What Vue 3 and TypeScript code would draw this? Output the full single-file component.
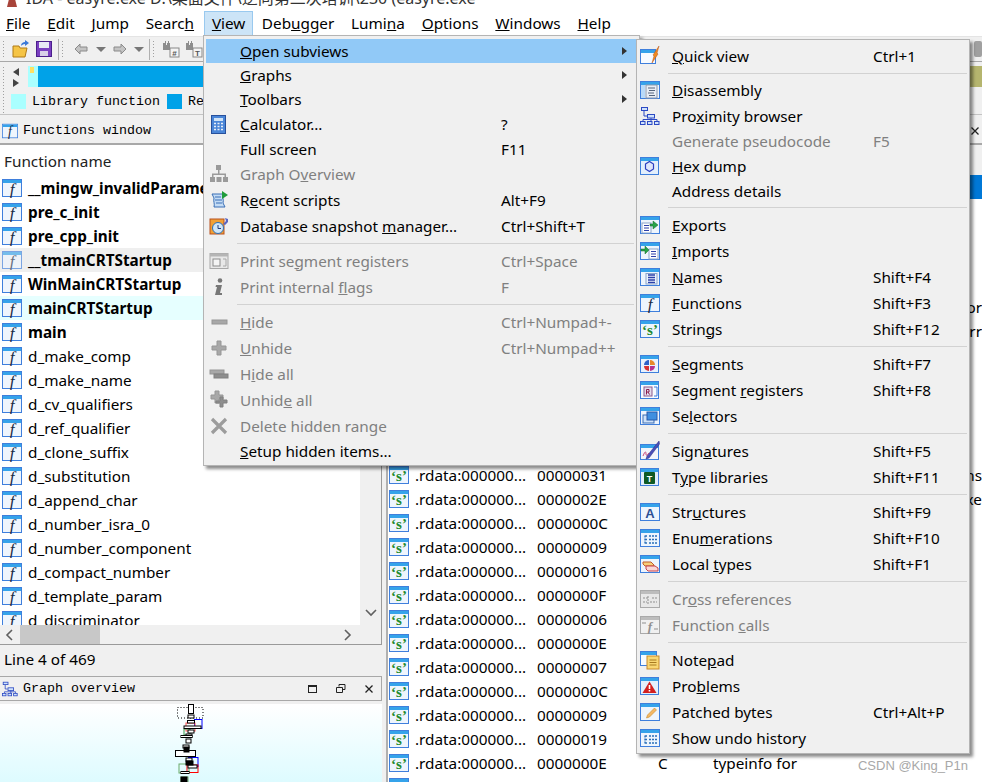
<script setup lang="ts">
// IDA Freeware main window with the View > Open subviews menu opened

type MenuItem = { label?: string; icon?: string; keys?: string; off?: boolean; more?: boolean; on?: boolean; sep?: boolean }

const frame = (inner: string) =>
  `<rect x=".5" y="1.500" width="19" height="17" fill="#eef5fd" stroke="#3f7fdc"/><rect x="1" y="2" width="18" height="3" fill="#35a3ea"/>${inner}`

const listLines = '<path d="M8 8h7M8 10.500h7M8 13h7M8 15.500h7" stroke="#2c3fa8" stroke-width="1.400"/><rect x="6" y="6.500" width="11" height="10.500" fill="none" stroke="#8aa3c9"/>'
const treeLines = '<path d="M5 7.500v8M5 8h3M5 11.500h3M5 15h3M9 8h8M9 11.500h8M9 15h8" stroke="#2a6fb8" stroke-width="1.300" stroke-dasharray="2 1"/>'

const icons: Record<string, string> = {
  func: frame('<text x="10" y="16.500" text-anchor="middle" class="glyph-f">f</text>'),
  str: frame('<text x="10" y="16" text-anchor="middle" class="glyph-s">‘s’</text>'),
  calc: '<rect x="2.500" y="1.500" width="14" height="18" fill="#4a86d8" stroke="#27509c"/><rect x="5" y="4" width="9" height="3" fill="#cfe3f7"/><path d="M5 9.500h9M5 12.500h9M5 15.500h9" stroke="#e9eef7" stroke-width="1.600" stroke-dasharray="2 1.500"/>',
  graphOff: '<g fill="#9a9a9a"><rect x="7" y="1" width="5" height="5"/><rect x="1" y="13" width="5" height="5"/><rect x="7.500" y="13" width="5" height="5"/><rect x="14" y="13" width="5" height="5"/><path d="M9 6h1.500v3.500H17V13h-1.500v-2h-11v2H3V9.500h6z"/></g>',
  scripts: '<path d="M3 4h11c-1 3 1 6 0 9l2 4H5c1-3-1-6 0-9z" fill="#c4dcf5" stroke="#3a6fb5"/><path d="M6 7h6M6 10h7M7 13h6" stroke="#3a6fb5"/><path d="M13 1l6 4-6 4z" fill="#1f9c3a"/>',
  snapshot: '<rect x="1" y="3" width="14" height="15" fill="#f0a035" stroke="#b8501f"/><circle cx="9" cy="12" r="5.500" fill="#cfe6f8" stroke="#2c6fb5"/><path d="M9 9v3.500h3" stroke="#223a78" fill="none"/><path d="M14 8l3-3-1-3 3 1v3l-3 3z" fill="#5a66c2"/>',
  segOff: '<rect x="1" y="2.500" width="18" height="15" fill="#e8e8e8" stroke="#a8a8a8"/><rect x="1" y="2.500" width="18" height="3" fill="#b5b5b5"/><rect x="4" y="8" width="7" height="7" fill="#f4f4f4" stroke="#8c8c8c"/><path d="M14 8h3v7h-3" fill="none" stroke="#a8a8a8"/>',
  infoOff: '<circle cx="11" cy="3.500" r="2.300" fill="#777"/><path d="M7 8h6l-2 8h2v2H6l2-8H6.500z" fill="#777"/>',
  hide: '<rect x="3" y="8" width="15" height="4" fill="#a8a8a8" stroke="#969696"/>',
  unhide: '<path d="M8 3h4v5h5v4h-5v5H8v-5H3V8h5z" fill="#a8a8a8" stroke="#969696"/>',
  hideAll: '<rect x="1" y="6" width="14" height="4" fill="#a8a8a8" stroke="#969696"/><rect x="5" y="10" width="14" height="4" fill="#8e8e8e" stroke="#808080"/>',
  unhideAll: '<path d="M6 1h4v4h4v4h-4v4H6V9H2V5h4z" fill="#a8a8a8" stroke="#969696"/><path d="M11 7h3v3h4v3h-4v4h-3v-4H7v-2h4z" fill="#8e8e8e" stroke="#808080"/>',
  deleteOff: '<path d="M3 3l14 14M17 3L3 17" stroke="#9c9c9c" stroke-width="3.200"/>',
  quick: '<rect x=".5" y="3.500" width="15" height="14" fill="#f7fbff" stroke="#3f7fdc"/><rect x="1" y="4" width="14" height="3" fill="#35a3ea"/><path d="M19 0l-6 9 1 1-2 7 6-9-1-1z" fill="#ef8a1e" stroke="#b7521a" stroke-width=".5"/>',
  disasm: frame('<rect x="6" y="5" width="11" height="13" fill="#e9eef5" stroke="#8a97ab"/><path d="M8 8h7M9 10.500h6M8 13h6M9 15.500h6" stroke="#56657c"/><rect x="1" y="5" width="4" height="13" fill="#b9daf8"/>'),
  proximity: '<g fill="#cfe2fb" stroke="#2b49c4"><rect x="1.500" y="1.500" width="6" height="3"/><rect x="7.500" y="8.500" width="7" height="3.500"/><rect x=".5" y="15.500" width="4.500" height="3"/><rect x="7.500" y="15.500" width="4.500" height="3"/><rect x="14.500" y="15.500" width="4.500" height="3"/></g><path d="M4 5v5h3M11 12v3M3 15v-1.500h14V15" fill="none" stroke="#2b49c4"/>',
  hex: '<rect x=".5" y="1.500" width="18" height="17" fill="#e3effc" stroke="#3f7fdc"/><rect x="1" y="2" width="17" height="3" fill="#35a3ea"/><path d="M5.500 8l4-2.500 4 2.500v5l-4 2.500-4-2.500z" fill="#dfe6fb" stroke="#2c3fc0" stroke-width="1.200"/>',
  exports: frame('<rect x="2" y="8" width="9" height="10" fill="#fff" stroke="#8aa3c9"/><path d="M4 10.500h5M4 13h5M4 15.500h5" stroke="#2c3fa8"/><path d="M10 9h3V6l5 4-5 4v-3h-3z" fill="#27a34a" stroke="#16692c" stroke-width=".5"/>'),
  imports: frame('<rect x="9" y="8" width="9" height="10" fill="#fff" stroke="#8aa3c9"/><path d="M11 10.500h5M11 13h5M11 15.500h5" stroke="#2c3fa8"/><path d="M1 8h4V5l4 4-4 4v-3H1z" fill="#27a34a" stroke="#16692c" stroke-width=".5"/>'),
  names: frame(listLines),
  segments: '<rect x=".5" y="1.500" width="18" height="17" fill="#eaf3fd" stroke="#3f7fdc"/><rect x="1" y="2" width="17" height="3" fill="#35a3ea"/><path d="M4 11a5 5 0 0 1 5-5v5z" fill="#2f62c8"/><path d="M10 6a5 5 0 0 1 5 5h-5z" fill="#e8892a"/><path d="M4 12h5v5a5 5 0 0 1-5-5z" fill="#d63333"/><path d="M10 12h5a5 5 0 0 1-5 5z" fill="#b5338f"/>',
  segregs: '<rect x=".5" y="1.500" width="18" height="17" fill="#f7fbff" stroke="#3f7fdc"/><rect x="1" y="2" width="17" height="3" fill="#35a3ea"/><rect x="4" y="7" width="8" height="9" fill="#e3dcec" stroke="#8c5a8c"/><path d="M6.500 14.500v-5h2.500v2.500H6.500M8 12l1.500 2.500" fill="none" stroke="#8b1d4d"/><path d="M14 7h3v9h-3" fill="none" stroke="#3f7fdc"/>',
  selectors: frame('<rect x="3" y="9" width="11" height="8" fill="#cfe2f8" stroke="#3c6fb5"/><rect x="7" y="6" width="10" height="8" fill="#3f8fe0" stroke="#2858a8"/>'),
  signatures: '<rect x=".5" y="3.500" width="18" height="15" fill="#f2f5fb" stroke="#3f7fdc"/><rect x="1" y="4" width="17" height="3" fill="#35a3ea"/><path d="M19 0L7 15l-1 3 3-1L19.500 3z" fill="#4a4fb8" stroke="#2a2a80" stroke-width=".5"/><path d="M3 15c2-5 3-5 3-2s2 0 3-1" fill="none" stroke="#c5487a"/>',
  typelib: '<rect x=".5" y="1.500" width="18" height="17" fill="#e3effc" stroke="#3f7fdc"/><rect x="1" y="2" width="17" height="3" fill="#35a3ea"/><rect x="4" y="5" width="11" height="12" rx="1" fill="#0f5a24"/><text x="9.500" y="15" text-anchor="middle" class="glyph-t">T</text>',
  structs: frame('<text x="10" y="16" text-anchor="middle" class="glyph-a">A</text>'),
  enums: frame(treeLines),
  local: frame('<path d="M3 8h8l3 3v1H5l-2-2z" fill="#f6cf7a" stroke="#c05a2a"/><path d="M6 12h9l3 2v3H8l-2-2z" fill="#f9d6d6" stroke="#c8434a"/>'),
  xrefOff: '<rect x=".5" y="1.500" width="19" height="17" fill="#e8e8e8" stroke="#aaa"/><rect x="1" y="2" width="18" height="3" fill="#bdbdbd"/><path d="M3 9h6M12 9h5M3 13h4M10 13h7M8 7v8" stroke="#8f8f8f" stroke-dasharray="2 1"/>',
  callsOff: '<rect x=".5" y="1.500" width="19" height="17" fill="#f0f0f0" stroke="#aaa"/><rect x="1" y="2" width="18" height="3" fill="#bdbdbd"/><text x="10" y="16" text-anchor="middle" class="glyph-off">f</text><path d="M2 8h4M14 14h4" stroke="#8f8f8f"/>',
  notepad: '<rect x=".5" y="1.500" width="16" height="14" fill="#f7fbff" stroke="#3f7fdc"/><rect x="1" y="2" width="15" height="3" fill="#35a3ea"/><rect x="7" y="6" width="12" height="13" fill="#f9d773" stroke="#c98a2a"/><path d="M9.500 10h7M9.500 12.500h7M9.500 15h7" stroke="#a87a20"/>',
  problems: '<rect x=".5" y="1.500" width="18" height="17" fill="#e3effc" stroke="#3f7fdc"/><rect x="1" y="2" width="17" height="3" fill="#35a3ea"/><path d="M9.500 5.500l7 11.500h-14z" fill="#d31f1f"/><path d="M9.500 9v4M9.500 14v1.500" stroke="#fff" stroke-width="1.600"/>',
  patched: frame('<path d="M14.500 6l2 2-7 7-3 1 1-3z" fill="#f3b866" stroke="#c98a2a" stroke-width=".6"/>'),
  undo: frame(treeLines),
}

const viewMenu: MenuItem[] = [
  { label: '&Open subviews', more: true, on: true },
  { label: '&Graphs', more: true },
  { label: '&Toolbars', more: true },
  { label: '&Calculator...', icon: 'calc', keys: '?' },
  { label: 'Full screen', keys: 'F11' },
  { label: 'Graph O&verview', icon: 'graphOff', off: true },
  { label: 'R&ecent scripts', icon: 'scripts', keys: 'Alt+F9' },
  { label: 'Database snapshot &manager...', icon: 'snapshot', keys: 'Ctrl+Shift+T' },
  { sep: true },
  { label: 'Print se&gment registers', icon: 'segOff', keys: 'Ctrl+Space', off: true },
  { label: 'Print internal &flags', icon: 'infoOff', keys: 'F', off: true },
  { sep: true },
  { label: '&Hide', icon: 'hide', keys: 'Ctrl+Numpad+-', off: true },
  { label: '&Unhide', icon: 'unhide', keys: 'Ctrl+Numpad++', off: true },
  { label: 'H&ide all', icon: 'hideAll', off: true },
  { label: 'Unhid&e all', icon: 'unhideAll', off: true },
  { label: 'Delete hidden range', icon: 'deleteOff', off: true },
  { label: '&Setup hidden items...' },
]

const subviews: MenuItem[] = [
  { label: '&Quick view', icon: 'quick', keys: 'Ctrl+1' },
  { sep: true },
  { label: '&Disassembly', icon: 'disasm' },
  { label: 'Pro&ximity browser', icon: 'proximity' },
  { label: 'Generate pseudocode', keys: 'F5', off: true },
  { label: '&Hex dump', icon: 'hex' },
  { label: 'Address details' },
  { sep: true },
  { label: '&Exports', icon: 'exports' },
  { label: '&Imports', icon: 'imports' },
  { label: '&Names', icon: 'names', keys: 'Shift+F4' },
  { label: '&Functions', icon: 'func', keys: 'Shift+F3' },
  { label: 'Strin&gs', icon: 'str', keys: 'Shift+F12' },
  { sep: true },
  { label: '&Segments', icon: 'segments', keys: 'Shift+F7' },
  { label: 'Segment &registers', icon: 'segregs', keys: 'Shift+F8' },
  { label: 'Se&lectors', icon: 'selectors' },
  { sep: true },
  { label: 'Sign&atures', icon: 'signatures', keys: 'Shift+F5' },
  { label: 'T&ype libraries', icon: 'typelib', keys: 'Shift+F11' },
  { sep: true },
  { label: 'Str&uctures', icon: 'structs', keys: 'Shift+F9' },
  { label: 'Enu&merations', icon: 'enums', keys: 'Shift+F10' },
  { label: 'Local &types', icon: 'local', keys: 'Shift+F1' },
  { sep: true },
  { label: 'Cr&oss references', icon: 'xrefOff', off: true },
  { label: 'Function &calls', icon: 'callsOff', off: true },
  { sep: true },
  { label: 'Note&pad', icon: 'notepad' },
  { label: 'Pro&blems', icon: 'problems' },
  { label: 'Patched bytes', icon: 'patched', keys: 'Ctrl+Alt+P' },
  { label: 'Show undo history', icon: 'undo' },
]

const menus = [
  { name: 'menu-view', items: viewMenu },
  { name: 'menu-sub', items: subviews },
]

const menubar = ['&File', '&Edit', '&Jump', 'Searc&h', '&View', 'Deb&ugger', 'Lumi&na', '&Options', '&Windows', '&Help']

// "&x" marks the mnemonic letter, same way Qt writes it
function parts(label = ''): [string, string, string] {
  const i = label.indexOf('&')
  if (i < 0) return [label, '', '']
  return [label.slice(0, i), label.charAt(i + 1), label.slice(i + 2)]
}

const functions = [
  { name: '__mingw_invalidParameterHandler', bold: true },
  { name: 'pre_c_init', bold: true },
  { name: 'pre_cpp_init', bold: true },
  { name: '__tmainCRTStartup', bold: true, cls: 'sel' },
  { name: 'WinMainCRTStartup', bold: true },
  { name: 'mainCRTStartup', bold: true, cls: 'cyan' },
  { name: 'main', bold: true },
  { name: 'd_make_comp' },
  { name: 'd_make_name' },
  { name: 'd_cv_qualifiers' },
  { name: 'd_ref_qualifier' },
  { name: 'd_clone_suffix' },
  { name: 'd_substitution' },
  { name: 'd_append_char' },
  { name: 'd_number_isra_0' },
  { name: 'd_number_component' },
  { name: 'd_compact_number' },
  { name: 'd_template_param' },
  { name: 'd_discriminator' },
]

const lengths = ['00000012', '00000021', '0000001A', '00000008', '00000014', '00000025', '00000031', '0000000B', '00000010', '00000018', '00000007', '0000001C',
  '00000031', '0000002E', '0000000C', '00000009', '00000016', '0000000F', '00000006', '0000000E', '00000007', '0000000C', '00000009', '00000019', '0000000E', '00000011']
const tails: Record<number, string> = { 5: 'or', 6: 'rr', 12: 'ns', 13: 'exe' }
const strings = lengths.map((len, i) => ({
  len,
  type: i === 24 ? 'C' : '',
  text: i === 24 ? 'typeinfo for' : '',
  tail: tails[i] ?? '',
  sel: i === 0,
}))

const graphBoxes = [
  { x: 188.5, y: 703.5, w: 5, h: 9, c: '#000', f: '#fff' },
  { x: 194.5, y: 718.5, w: 7.5, h: 9, c: '#0000ff', f: 'none' },
  { x: 186, y: 722, w: 9, h: 8, c: '#ff5050', f: 'none' },
  { x: 184, y: 728, w: 6, h: 6, c: '#3a9a4a', f: 'none' },
  { x: 188.5, y: 756.5, w: 9.5, h: 9, c: '#0000ff', f: 'none' },
  { x: 187, y: 764, w: 11, h: 7.5, c: '#ff0000', f: 'none' },
  { x: 179, y: 763, w: 10, h: 9, c: '#6aa96a', f: 'none' },
  { x: 181, y: 776, w: 7, h: 6, c: '#6aa96a', f: 'none' },
  { x: 188, y: 714, w: 6, h: 3, c: '#000', f: '#fff' },
  { x: 187.500, y: 719.500, w: 7, h: 2.500, c: '#000', f: '#fff' },
  { x: 184, y: 725, w: 17, h: 2.500, c: '#000', f: '#fff' },
  { x: 188, y: 729, w: 6, h: 3, c: '#000', f: '#fff' },
  { x: 186, y: 733, w: 6, h: 3, c: '#000', f: '#fff' },
  { x: 181, y: 734.500, w: 11, h: 2, c: '#000', f: '#fff' },
  { x: 186, y: 738, w: 5, h: 4, c: '#000', f: '#fff' },
  { x: 183, y: 744, w: 6, h: 3, c: '#000', f: '#fff' },
  { x: 175.500, y: 749.500, w: 20, h: 6, c: '#000', f: '#fff' },
  { x: 186, y: 757, w: 6, h: 3, c: '#000', f: '#fff' },
  { x: 188, y: 764, w: 9, h: 3, c: '#000', f: '#fff' },
  { x: 181, y: 770.500, w: 8, h: 2, c: '#000', f: '#fff' },
  { x: 181, y: 776, w: 6, h: 6, c: '#000', f: '#000' },
  { x: 184, y: 746, w: 5, h: 5, c: '#000', f: '#000' },
  { x: 186, y: 760, w: 7, h: 4, c: '#000', f: '#000' },
]
</script>

<template>
  <div class="app">
    <div class="titlebar">
      <svg class="title-icon" width="12" height="12" viewBox="0 0 12 12"><path d="M1 12L4 0h4l3 12z" fill="#a8443a"/></svg>
      <span>IDA - easyre.exe D:\桌面文件\逆向第二次培训\230 (easyre.exe</span>
    </div>

    <nav class="menubar">
      <span v-for="m in menubar" :key="m" class="menubar-item" :class="{ open: m === '&View' }">{{ parts(m)[0] }}<u>{{ parts(m)[1] }}</u>{{ parts(m)[2] }}</span>
    </nav>

    <div class="toolbar">
      <i class="grip"></i>
      <svg class="tool folder" width="18" height="18" viewBox="0 0 18 18"><path d="M1 6h6l1 2h7l-2 9H1z" fill="#f5c445" stroke="#b07a16"/><path d="M9 6c0-3 2-4 4-4V0l4 3-4 3V4c-2 0-3 1-4 2z" fill="#3a78d8"/></svg>
      <svg class="tool save" width="16" height="16" viewBox="0 0 16 16"><rect x=".5" y=".5" width="15" height="15" fill="#7a3fc0" stroke="#4b1f8c"/><rect x="3" y="1" width="10" height="6" fill="#e8e8f5"/><rect x="4" y="10" width="8" height="5" fill="#d8d0e8"/></svg>
      <i class="toolsep"></i>
      <i class="grip"></i>
      <svg class="tool back" width="14" height="12" viewBox="0 0 14 12"><path d="M6 1v3h7v4H6v3L1 6z" fill="#c4c4c4" stroke="#8a8a8a"/></svg>
      <i class="drop first"></i>
      <svg class="tool fwd" width="14" height="12" viewBox="0 0 14 12"><path d="M8 1v3H1v4h7v3l5-5z" fill="#c4c4c4" stroke="#8a8a8a"/></svg>
      <i class="drop second"></i>
      <i class="toolsep next"></i>
      <i class="grip"></i>
      <svg class="tool bino" width="18" height="18" viewBox="0 0 18 18"><path d="M1 3h3v2h1V3h3v7H1zM3 1h1v2H3zM6 1h1v2H6z" fill="#8d8d8d"/><rect x="8" y="8" width="9" height="9" fill="#f4f4f4" stroke="#888"/><text x="12.500" y="15.500" text-anchor="middle" class="glyph-tool">#</text></svg>
      <svg class="tool bino two" width="18" height="18" viewBox="0 0 18 18"><path d="M1 3h3v2h1V3h3v7H1zM3 1h1v2H3zM6 1h1v2H6z" fill="#8d8d8d"/><rect x="8" y="8" width="9" height="9" fill="#f4f4f4" stroke="#888"/><text x="12.500" y="15.500" text-anchor="middle" class="glyph-tool">T</text></svg>
      <i class="toolend"></i>
    </div>

    <div class="navigator">
      <div class="nav-row">
        <i class="grip tall"></i>
        <div class="nav-arrows"><i class="arrow-left"></i><i class="arrow-right"></i></div>
        <div class="nav-band"><i class="band-lib"><b></b></i><i class="band-code"></i><i class="band-data"></i></div>
      </div>
      <div class="legend">
        <i class="swatch lib"></i><span class="mono legend-lib">Library function</span>
        <i class="swatch code"></i><span class="mono">Regular function</span>
      </div>
    </div>

    <div class="workspace">
      <section class="left">
        <header class="dock-title">
          <svg class="dock-icon" width="16" height="16" viewBox="0 0 20 20" v-html="icons.func"></svg>
          <span class="mono">Functions window</span>
        </header>
        <div class="dock-body">
          <div class="list-wrap">
            <div class="list">
              <div class="list-head">Function name</div>
              <div class="rows">
                <div v-for="f in functions" :key="f.name" class="fn-row" :class="[f.cls, { bold: f.bold }]">
                  <svg class="row-icon" width="20" height="20" viewBox="0 0 20 20" v-html="icons.func"></svg>
                  <span class="fn-name">{{ f.name }}</span>
                </div>
              </div>
            </div>
            <div class="vscroll"><svg width="12" height="8" viewBox="0 0 12 8"><path d="M1 1l5 5 5-5" fill="none" stroke="#606060" stroke-width="1.600"/></svg></div>
          </div>
          <div class="hscroll">
            <svg class="hs-left" width="8" height="12" viewBox="0 0 8 12"><path d="M7 1L2 6l5 5" fill="none" stroke="#606060" stroke-width="1.600"/></svg>
            <i class="hs-thumb"></i>
            <svg class="hs-right" width="8" height="12" viewBox="0 0 8 12"><path d="M1 1l5 5-5 5" fill="none" stroke="#606060" stroke-width="1.600"/></svg>
          </div>
        </div>
        <div class="status">Line 4 of 469</div>
        <header class="dock-title graph-title">
          <svg class="dock-icon" width="16" height="16" viewBox="0 0 20 20" v-html="icons.proximity"></svg>
          <span class="mono">Graph overview</span>
          <span class="dock-btns">
            <svg width="10" height="10" viewBox="0 0 10 10"><rect x=".5" y="1.500" width="8" height="7" fill="none" stroke="#222"/><path d="M0 2h9" stroke="#222" stroke-width="2"/></svg>
            <svg width="10" height="10" viewBox="0 0 10 10"><path d="M3 2.500V.5h6v5H7M.5 3.500h6v5h-6z" fill="none" stroke="#222"/></svg>
            <svg width="10" height="10" viewBox="0 0 10 10"><path d="M1.500 1.500l7 7M8.500 1.500l-7 7" stroke="#222" stroke-width="1.300"/></svg>
          </span>
        </header>
        <div class="graph">
          <svg class="graph-svg" width="381" height="79" viewBox="0 703 381 79">
            <rect x="177.500" y="706.500" width="25.500" height="10.500" fill="none" stroke="#000" stroke-dasharray="1 2"/>
            <rect v-for="(b, i) in graphBoxes" :key="i" :x="b.x" :y="b.y" :width="b.w" :height="b.h" :fill="b.f" :stroke="b.c"/>
          </svg>
        </div>
      </section>

      <section class="right">
        <header class="dock-title right-title">
          <svg width="10" height="10" viewBox="0 0 10 10"><path d="M1.500 1.500l7 7M8.500 1.500l-7 7" stroke="#222" stroke-width="1.300"/></svg>
        </header>
        <div class="strings">
          <div v-for="(s, i) in strings" :key="i" class="str-row" :class="{ sel: s.sel }">
            <svg class="row-icon" width="20" height="20" viewBox="0 0 20 20" v-html="icons.str"></svg>
            <span class="str-addr">.rdata:000000...</span>
            <span class="str-len">{{ s.len }}</span>
            <span class="str-type">{{ s.type }}</span>
            <span class="str-text">{{ s.text }}</span>
            <span class="str-tail">{{ s.tail }}</span>
          </div>
        </div>
      </section>
    </div>

    <div v-for="menu in menus" :key="menu.name" class="menu" :class="menu.name">
      <template v-for="(item, i) in menu.items" :key="i">
        <div v-if="item.sep" class="menu-sep"></div>
        <div v-else class="menu-item" :class="{ off: item.off, on: item.on, iconed: item.icon }">
          <span class="menu-icon"><svg v-if="item.icon" width="20" height="20" viewBox="0 0 20 20" v-html="icons[item.icon]"></svg></span>
          <span class="menu-label">{{ parts(item.label)[0] }}<u>{{ parts(item.label)[1] }}</u>{{ parts(item.label)[2] }}</span>
          <span class="menu-keys">{{ item.keys }}</span>
          <i v-if="item.more" class="menu-more"></i>
        </div>
      </template>
    </div>

    <div class="watermark">CSDN @King_P1n</div>
  </div>
</template>

<style scoped>
.app {
  position: relative;
  width: 982px;
  height: 782px;
  overflow: hidden;
  background: #f0f0f0;
  color: #000;
  font-family: "Noto Sans", "Noto Sans CJK SC", sans-serif;
  font-size: 15.3px;
}

.mono {
  font-family: "Liberation Mono", monospace;
  font-size: 13.33px;
}

.titlebar {
  display: flex;
  height: 10px;
  overflow: hidden;
  background: #fff;
  color: #333;
  font-size: 16px;
  line-height: 1;
  white-space: nowrap;
}
.title-icon {
  flex: none;
  margin: -5px 0 0 6px;
}
.titlebar span {
  display: block;
  margin: -10px 0 0 8px;
}

.menubar {
  display: flex;
  height: 26px;
  padding-left: 1px;
  background: #fff;
  border-bottom: 1px solid #e4e4e4;
  align-items: center;
}
.menubar-item {
  display: flex;
  align-items: center;
  height: 26px;
  padding: 0 5px;
  margin-right: 6.8px;
  white-space: pre;
}
.menubar-item.open {
  height: 25px;
  margin: 0 4px 0 -1.5px;
  padding: 0 6.5px;
  background: #cce4f7;
  border: 1px solid #99c9ef;
  box-sizing: border-box;
}

.toolbar {
  display: flex;
  align-items: center;
  height: 25px;
  border-bottom: 1px solid #a8a8a8;
  box-sizing: border-box;
}
.grip {
  width: 3px;
  height: 19px;
  margin-left: 2px;
  background-image: radial-gradient(#a0a0a0 0.8px, transparent 1px);
  background-size: 3px 3px;
}
.grip.tall {
  height: 48px;
  flex: none;
}
.tool {
  flex: none;
}
.folder { margin-left: 7px; }
.save { margin-left: 6px; }
.toolsep {
  width: 1px;
  height: 21px;
  margin-left: 6px;
  background: #b0b0b0;
}
.back { margin-left: 10px; }
.drop {
  width: 0;
  height: 0;
  border: 5px solid transparent;
  border-top: 5px solid #777;
  border-bottom: 0;
}
.drop.first { margin-left: 8px; }
.fwd { margin-left: 7px; }
.drop.second { margin-left: 7px; }
.toolsep.next { margin-left: 5px; }
.bino { margin-left: 7px; }
.bino.two { margin-left: 5px; }
.toolend {
  width: 8px;
  height: 16px;
  margin-left: auto;
  border-radius: 2px;
  background: #a0a0a0;
}

.navigator {
  height: 53px;
  border-bottom: 1px solid #c4c4c4;
  box-sizing: border-box;
}
.nav-row {
  display: flex;
  height: 25px;
  padding-top: 4px;
  box-sizing: border-box;
}
.nav-arrows {
  display: flex;
  flex-direction: column;
  width: 23px;
  align-items: center;
  gap: 3px;
  padding: 2px 2px 0 1px;
  box-sizing: border-box;
}
.arrow-left, .arrow-right {
  width: 0;
  height: 0;
  border: 4px solid transparent;
}
.arrow-left { border-right: 6px solid #444; border-left: 0; }
.arrow-right { border-left: 6px solid #444; border-right: 0; }
.nav-band {
  display: flex;
  flex: 1;
  height: 21px;
}
.band-lib {
  position: relative;
  width: 10px;
  background: #aaffff;
}
.band-lib b {
  position: absolute;
  left: 2px;
  top: 1px;
  width: 4px;
  height: 6px;
  background: #ffe060;
}
.band-code {
  flex: 1;
  background: #00a2e8;
}
.band-data {
  width: 80px;
  background: #b5b56e;
}
.legend {
  display: flex;
  align-items: center;
  height: 24px;
  padding: 5px 0 0 11px;
  box-sizing: border-box;
}
.swatch {
  width: 15px;
  height: 15px;
  margin-right: 6px;
}
.swatch.lib { background: #aaffff; }
.swatch.code { background: #00a2e8; }
.legend-lib { margin-right: 7px; }

.workspace {
  display: flex;
  gap: 4px;
  height: 667px;
  padding-top: 3px;
  box-sizing: border-box;
}

.left {
  width: 382px;
  flex: none;
}
.dock-title {
  display: flex;
  align-items: center;
  height: 25px;
  padding-left: 2px;
  gap: 5px;
  border-bottom: 2px solid #a8a8a8;
  box-sizing: content-box;
}
.dock-icon { flex: none; }

.dock-body {
  height: 500px;
  border-right: 1px solid #9a9a9a;
  border-bottom: 1px solid #9a9a9a;
  box-sizing: border-box;
}
.list-wrap {
  display: flex;
  height: 480px;
}
.list {
  width: 360px;
  overflow: hidden;
  background: #fff;
}
.list-head {
  display: flex;
  align-items: center;
  height: 24px;
  margin: 3px 0 4px;
  padding: 1px 0 0 4px;
  box-sizing: border-box;
  color: #222;
}
.rows {
  height: 449px;
  overflow: hidden;
}
.fn-row {
  display: flex;
  align-items: center;
  height: 24px;
  padding-left: 2px;
  gap: 6px;
  white-space: nowrap;
}
.fn-name { margin-bottom: 1px; }
.fn-row.bold { font-weight: 700; }
.fn-row.sel { background: #efefef; }
.fn-row.sel .row-icon { opacity: 0.65; }
.fn-row.cyan { background: #e6ffff; }
.row-icon { flex: none; }
.vscroll {
  display: flex;
  flex: 1;
  align-items: flex-end;
  justify-content: center;
  padding-bottom: 8px;
  box-sizing: border-box;
}
.hscroll {
  position: relative;
  display: flex;
  align-items: center;
  height: 19px;
}
.hs-left { margin-left: 5px; }
.hs-thumb {
  width: 80px;
  height: 19px;
  margin-left: 7px;
  background: #c8c8c8;
}
.hs-right { margin-left: 244px; }

.status {
  display: flex;
  align-items: center;
  height: 31px;
  padding: 0 0 3px 4px;
  box-sizing: border-box;
}
.graph-title {
  height: 23px;
  border-top: 1px solid #a8a8a8;
  border-bottom-width: 1px;
  border-right: 1px solid #a8a8a8;
}
.dock-btns {
  display: flex;
  gap: 18px;
  margin-left: auto;
  padding-right: 7px;
}
.graph {
  position: relative;
  height: 79px;
  margin-top: 3px;
  background: linear-gradient(#fff, #ddfbff);
}
.graph-svg {
  position: absolute;
  left: 0;
  top: 0;
}

.right {
  flex: 1;
  min-width: 0;
  border-left: 2px solid #b0b0b0;
}
.right-title {
  justify-content: flex-end;
  padding-right: 2px;
}
.strings {
  height: 640px;
  margin-top: 30px;
  overflow: hidden;
  background: #fff;
}
.str-row {
  display: flex;
  align-items: center;
  height: 24px;
  padding-left: 1px;
  white-space: nowrap;
}
.str-row.sel { background: #0078d7; }
.str-addr { width: 122px; margin-left: 6px; flex: none; }
.str-len { width: 121px; flex: none; }
.str-type { width: 55px; flex: none; }
.str-text { flex: none; }
.str-tail { margin-left: auto; }

.menu {
  position: absolute;
  background: #f0f0f0;
  border: 1px solid #b4b4b4;
  box-sizing: border-box;
  padding: 3px 0 2px;
  box-shadow: 3px 3px 3px rgba(0, 0, 0, 0.45);
  white-space: nowrap;
}
.menu-view {
  left: 203px;
  top: 35px;
  width: 437px;
  padding-left: 2px;
  padding-right: 3px;
  --label: 261px;
  --gap: 11px;
}
.menu-sub {
  left: 636px;
  top: 39px;
  width: 334px;
  --label: 201px;
  --gap: 12px;
}
.menu-item {
  display: flex;
  align-items: center;
  height: 24px;
  padding-left: 3px;
  box-sizing: border-box;
}
.menu-item.iconed { height: 26px; }
.menu-item.on { background: #91c9f7; }
.menu-item.off { color: #808080; }
.menu-icon {
  display: flex;
  flex: none;
  width: 20px;
  height: 20px;
  margin-right: var(--gap);
}
.menu-label {
  width: var(--label);
  flex: none;
  margin-bottom: 1px;
  white-space: pre;
}
.menu-keys { flex: none; margin-bottom: 1px; }
.menu-more {
  width: 0;
  height: 0;
  margin-left: auto;
  margin-right: 9px;
  border: 4px solid transparent;
  border-left: 5px solid #333;
  border-right: 0;
}
.menu-sep {
  height: 9px;
  margin-left: 31px;
  margin-right: 2px;
  background: linear-gradient(#d2d2d2, #d2d2d2) center / 100% 1px no-repeat;
}
.menu-sub .menu-sep:nth-child(2) { height: 8px; }

.watermark {
  position: absolute;
  right: 14px;
  bottom: 9px;
  color: #a8a8a8;
  font-family: "Liberation Sans", sans-serif;
  font-size: 13px;
}
</style>

<style>
.glyph-f {
  font: italic 400 17px "Liberation Serif", serif;
  fill: #1c2a44;
}
.glyph-s {
  font: 700 15px "Liberation Serif", serif;
  fill: #1f8a2e;
}
.glyph-t {
  font: 700 9px "Liberation Sans", sans-serif;
  fill: #fff;
}
.glyph-a {
  font: 700 13px "Liberation Sans", sans-serif;
  fill: #2b4f94;
}
.glyph-off {
  font: italic 700 13px "Liberation Serif", serif;
  fill: #8f8f8f;
}
.glyph-tool {
  font: 700 8px "Liberation Sans", sans-serif;
  fill: #555;
}
</style>
